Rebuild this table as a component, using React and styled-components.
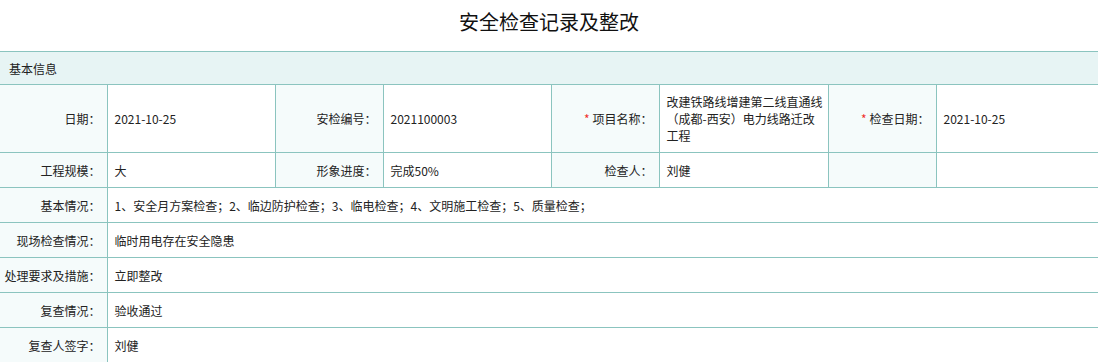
import React from 'react'
import styled, { createGlobalStyle } from 'styled-components'

const line = '#8bc4bf'

const GlobalStyle = createGlobalStyle`
    html, body {
        margin: 0;
        padding: 0;
        background: #fff;
        overflow: hidden;
    }
    body {
        font-family: "Noto Sans CJK SC", "Noto Sans", sans-serif;
        color: #222;
    }
`

const Page = styled.div`
    width: 100%;
`
const Title = styled.h1`
    margin: 0 0 7px;
    height: 44px;
    line-height: 44px;
    text-align: center;
    font-size: 20px;
    font-weight: 400;
    color: #111;
`
const Sheet = styled.table`
    width: 100%;
    table-layout: fixed;
    border-collapse: collapse;
    font-size: 12px;
    line-height: 17px;

    td, th {
        border: 1px solid ${line};
    }
    tr > :first-child {
        border-left: none;
    }
    tr > :last-child {
        border-right: none;
    }
`
const SectionHead = styled.th`
    height: 32px;
    padding: 0 9px;
    text-align: left;
    font-weight: 400;
    background: #e7f4f4;
`
const Label = styled.td`
    height: ${({ $tall }) => ($tall ? '67px' : '34px')};
    padding: 0 6px 0 4px;
    text-align: right;
    vertical-align: middle;
    white-space: nowrap;
    background: #f5fbfb;
`
const Value = styled.td`
    padding: 0 4px 0 7px;
    text-align: left;
    vertical-align: middle;
    word-break: break-all;
`
const Required = styled.span`
    color: #f0302a;
    margin-right: 3px;
    font-size: 12px;
`

const widths = [107, 168, 108, 168, 108, 169, 108]

const notes = [
    ['基本情况：', '1、安全月方案检查；2、临边防护检查；3、临电检查；4、文明施工检查；5、质量检查；'],
    ['现场检查情况：', '临时用电存在安全隐患'],
    ['处理要求及措施：', '立即整改'],
    ['复查情况：', '验收通过'],
    ['复查人签字：', '刘健'],
]

const App = () => {
  return (
    <Page>
        <GlobalStyle />
        <Title>安全检查记录及整改</Title>
        <Sheet>
            <colgroup>
                {widths.map((w, i) => <col key={i} style={{ width: w }} />)}
                <col />
            </colgroup>
            <tbody>
                <tr>
                    <SectionHead colSpan={8}>基本信息</SectionHead>
                </tr>
                <tr>
                    <Label $tall>日期：</Label>
                    <Value>2021-10-25</Value>
                    <Label>安检编号：</Label>
                    <Value>2021100003</Value>
                    <Label><Required>*</Required>项目名称：</Label>
                    <Value>改建铁路线增建第二线直通线（成都-西安）电力线路迁改工程</Value>
                    <Label><Required>*</Required>检查日期：</Label>
                    <Value>2021-10-25</Value>
                </tr>
                <tr>
                    <Label>工程规模：</Label>
                    <Value>大</Value>
                    <Label>形象进度：</Label>
                    <Value>完成50%</Value>
                    <Label>检查人：</Label>
                    <Value>刘健</Value>
                    <Label />
                    <Value />
                </tr>
                {notes.map(([label, text]) => (
                    <tr key={label}>
                        <Label>{label}</Label>
                        <Value colSpan={7}>{text}</Value>
                    </tr>
                ))}
            </tbody>
        </Sheet>
    </Page>
  )
}

export default App
